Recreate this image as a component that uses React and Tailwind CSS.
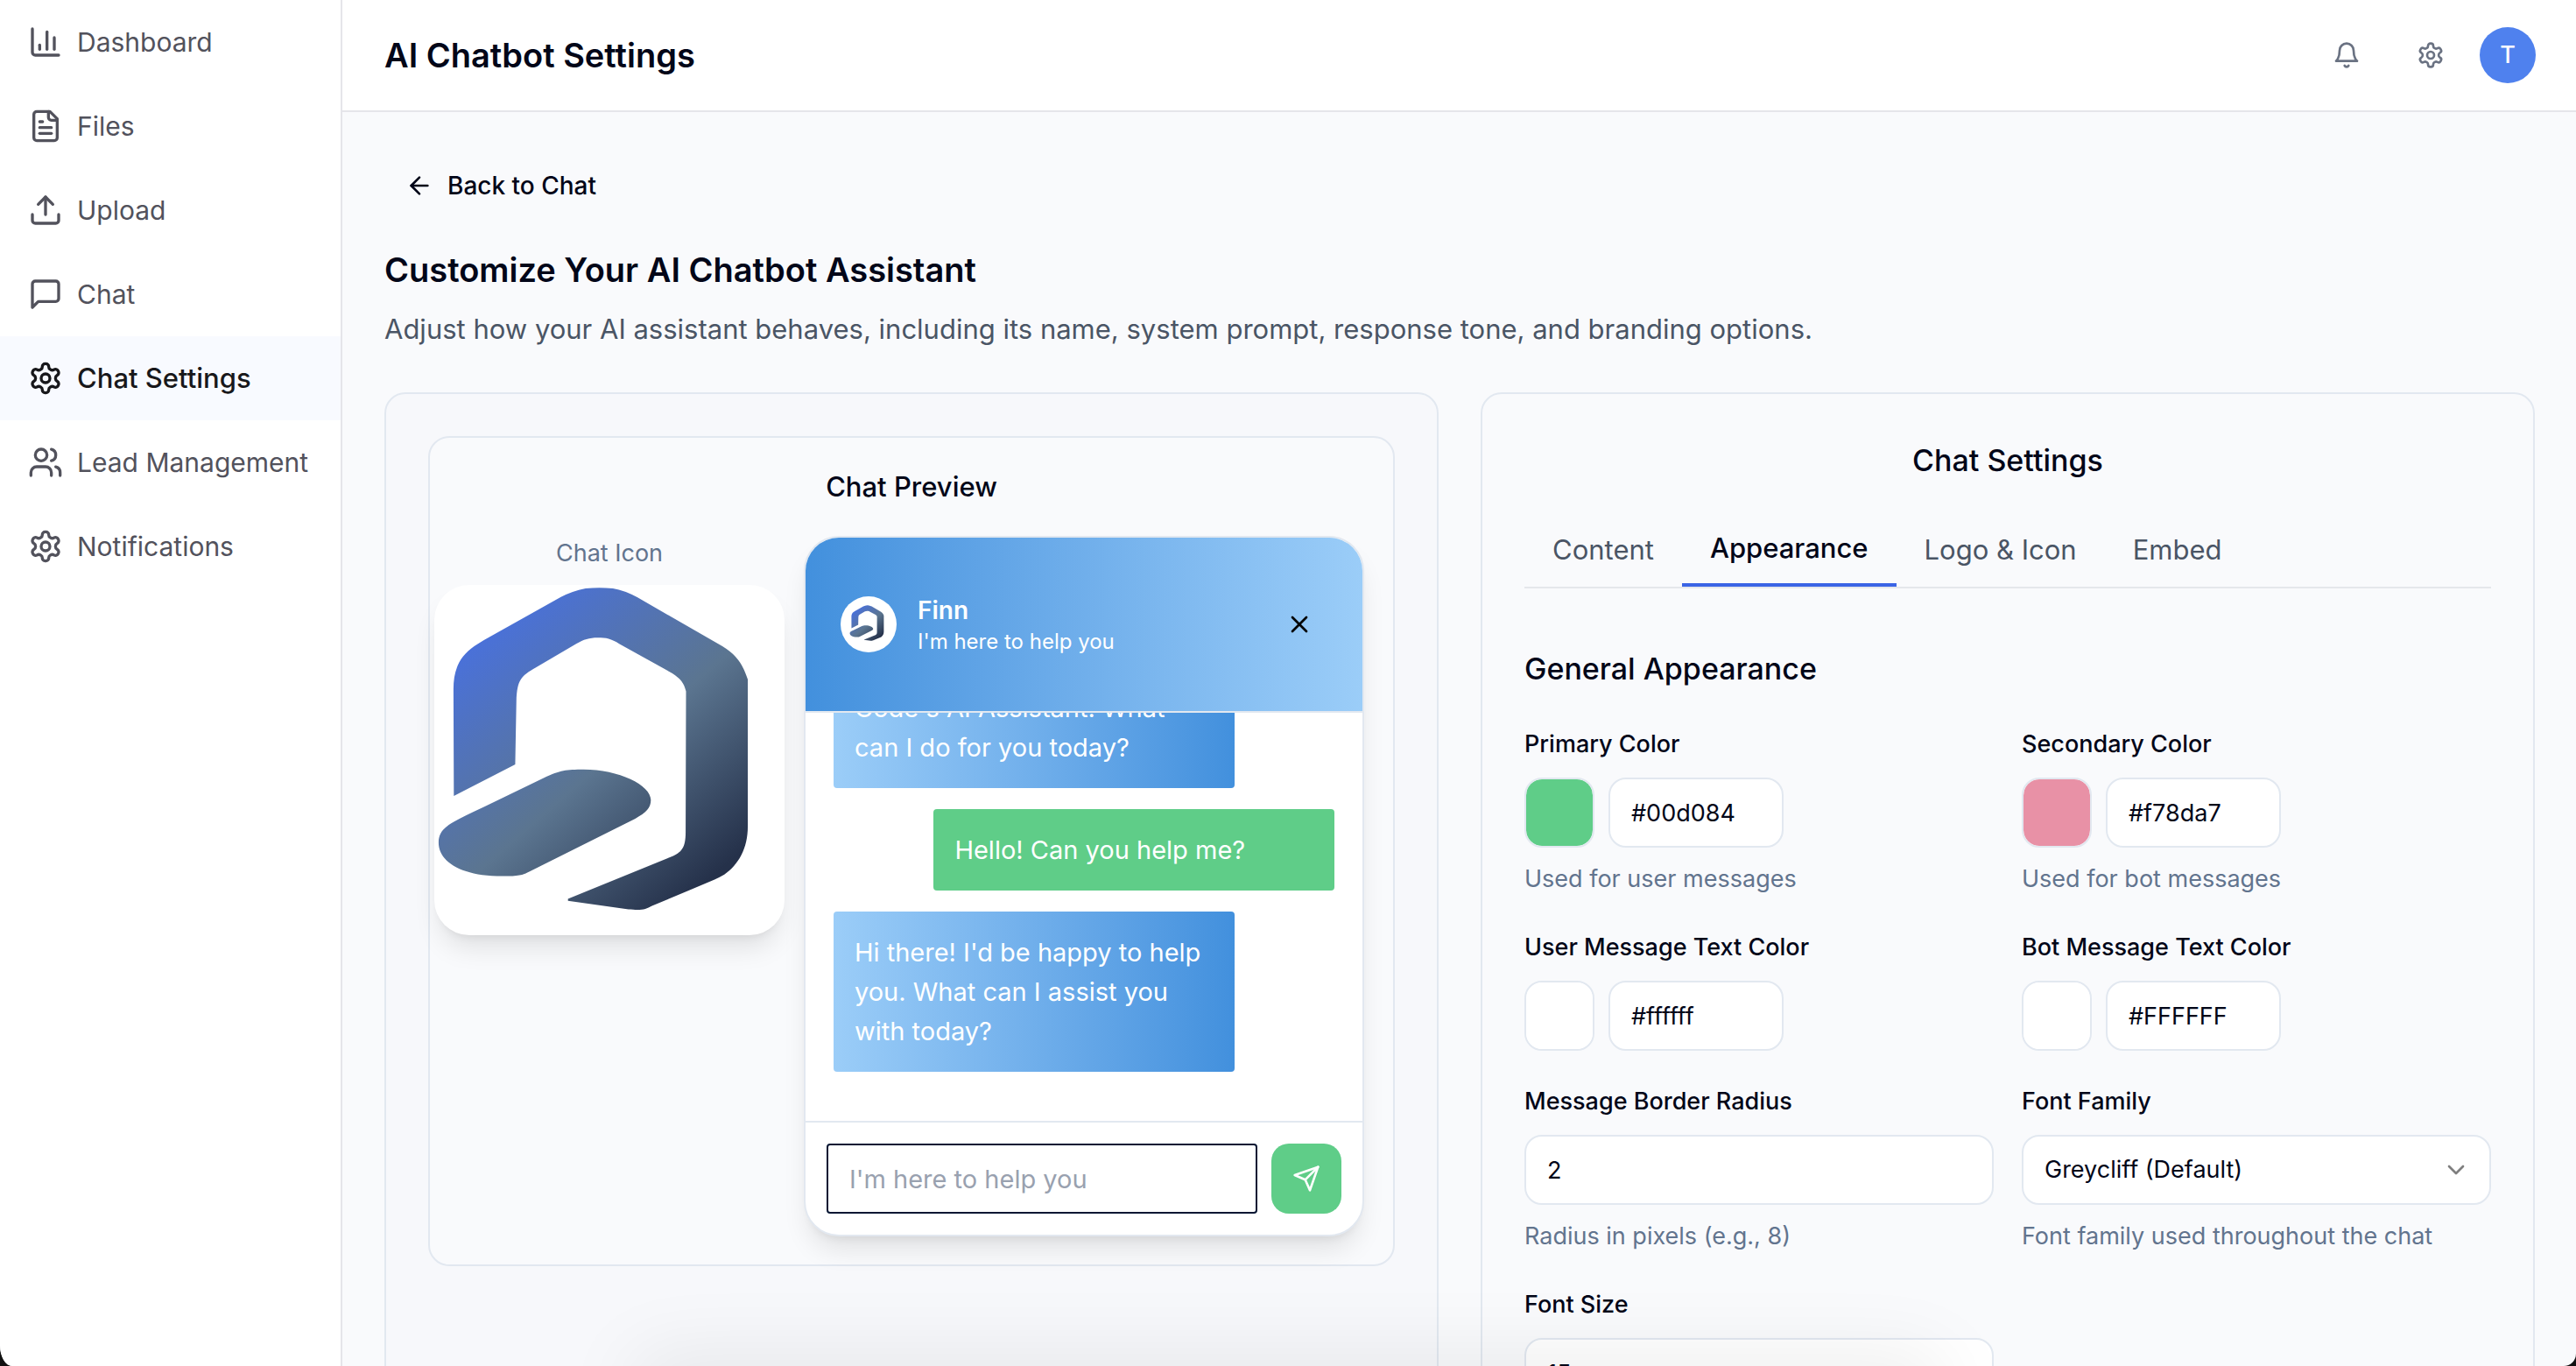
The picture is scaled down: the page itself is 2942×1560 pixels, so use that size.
import React, { useId, useState } from "react";
import { ArrowLeft, ChartColumn, ChevronDown, X } from "lucide-react";

function Icon({ className, children }) {
  return (
    <svg
      viewBox="0 0 24 24"
      fill="none"
      stroke="currentColor"
      strokeWidth="2"
      strokeLinecap="round"
      strokeLinejoin="round"
      aria-hidden="true"
      className={className}
    >
      {children}
    </svg>
  );
}

const FileIcon = (p) => (
  <Icon {...p}>
    <path d="M15 2H6a2 2 0 0 0-2 2v16a2 2 0 0 0 2 2h12a2 2 0 0 0 2-2V7Z" />
    <path d="M14 2v4a2 2 0 0 0 2 2h4" />
    <path d="M10 9H8" />
    <path d="M16 13H8" />
    <path d="M16 17H8" />
  </Icon>
);

const UploadIcon = (p) => (
  <Icon {...p}>
    <path d="M21 15v4a2 2 0 0 1-2 2H5a2 2 0 0 1-2-2v-4" />
    <path d="m17 8-5-5-5 5" />
    <path d="M12 3v12" />
  </Icon>
);

const MessageIcon = (p) => (
  <Icon {...p}>
    <path d="M21 15a2 2 0 0 1-2 2H7l-4 4V5a2 2 0 0 1 2-2h14a2 2 0 0 1 2 2z" />
  </Icon>
);

const GearIcon = (p) => (
  <Icon {...p}>
    <path d="M12.22 2h-.44a2 2 0 0 0-2 2v.18a2 2 0 0 1-1 1.73l-.43.25a2 2 0 0 1-2 0l-.15-.08a2 2 0 0 0-2.73.73l-.22.38a2 2 0 0 0 .73 2.73l.15.1a2 2 0 0 1 1 1.72v.51a2 2 0 0 1-1 1.74l-.15.09a2 2 0 0 0-.73 2.73l.22.38a2 2 0 0 0 2.73.73l.15-.08a2 2 0 0 1 2 0l.43.25a2 2 0 0 1 1 1.73V20a2 2 0 0 0 2 2h.44a2 2 0 0 0 2-2v-.18a2 2 0 0 1 1-1.73l.43-.25a2 2 0 0 1 2 0l.15.08a2 2 0 0 0 2.73-.73l.22-.39a2 2 0 0 0-.73-2.73l-.15-.08a2 2 0 0 1-1-1.74v-.5a2 2 0 0 1 1-1.74l.15-.09a2 2 0 0 0 .73-2.73l-.22-.38a2 2 0 0 0-2.73-.73l-.15.08a2 2 0 0 1-2 0l-.43-.25a2 2 0 0 1-1-1.73V4a2 2 0 0 0-2-2z" />
    <circle cx="12" cy="12" r="3" />
  </Icon>
);

const UsersIcon = (p) => (
  <Icon {...p}>
    <path d="M16 21v-2a4 4 0 0 0-4-4H6a4 4 0 0 0-4 4v2" />
    <circle cx="9" cy="7" r="4" />
    <path d="M22 21v-2a4 4 0 0 0-3-3.87" />
    <path d="M16 3.13a4 4 0 0 1 0 7.75" />
  </Icon>
);

const BellIcon = (p) => (
  <Icon {...p}>
    <path d="M6 8a6 6 0 0 1 12 0c0 7 3 9 3 9H3s3-2 3-9" />
    <path d="M10.3 21a1.94 1.94 0 0 0 3.4 0" />
  </Icon>
);

const SendIcon = (p) => (
  <Icon {...p}>
    <path d="m22 2-7 20-4-9-9-4Z" />
    <path d="M22 2 11 13" />
  </Icon>
);

function BrandMark({ className }) {
  const id = useId();
  return (
    <svg viewBox="148 533 896 896" aria-hidden="true" className={className}>
      <defs>
        <linearGradient id={id} gradientUnits="userSpaceOnUse" x1="220" y1="720" x2="774" y2="1355">
          <stop offset="0" stopColor="#4a71d8" />
          <stop offset="0.52" stopColor="#5b7590" />
          <stop offset="1" stopColor="#25314a" />
        </linearGradient>
      </defs>
      <g fill={`url(#${id})`}>
        <path d="M198 1073L197 800C197 748 214 715 250 690Q262 682 275 674L472 564Q500 549 535 542Q570 538 605 542Q635 547 668 565L885 690C925 714 938 740 950 775L950 1150C950 1208 926 1248 890 1274Q878 1281 865 1287L705 1354C688 1363 680 1366 645 1363L490 1341L490 1336L755 1228C780 1217 791 1206 791 1165L792 805C786 782 778 773 757 759L622 684C600 670 588 668 566 668C544 668 530 673 512 683L408 744C370 766 360 775 358 830L355 992Z" />
        <path d="M159 1192C159 1168 172 1154 198 1139Q225 1124 275 1101L430 1026C470 1007 485 1005 530 1005C620 1005 702 1045 702 1083C702 1104 690 1115 662 1131L392 1266C372 1276 365 1278 322 1278C215 1278 159 1240 159 1192Z" />
      </g>
    </svg>
  );
}

const navItems = [
  { label: "Dashboard", icon: ChartColumn },
  { label: "Files", icon: FileIcon },
  { label: "Upload", icon: UploadIcon },
  { label: "Chat", icon: MessageIcon },
  { label: "Chat Settings", icon: GearIcon, active: true },
  { label: "Lead Management", icon: UsersIcon },
  { label: "Notifications", icon: GearIcon },
];

function Sidebar() {
  return (
    <nav aria-label="Main" className="w-[391px] shrink-0 border-r-2 border-[#e5e5ea] bg-white">
      <ul>
        {navItems.map(({ label, icon: I, active }) => (
          <li key={label}>
            <a
              href="#"
              aria-current={active ? "page" : undefined}
              className={
                active
                  ? "flex h-24 items-center gap-4 bg-[#f8faff] px-8 text-[31px] font-medium text-zinc-900"
                  : "flex h-24 items-center gap-4 px-8 text-[30px] text-zinc-600"
              }
            >
              <I className="size-10 shrink-0" />
              <span className="whitespace-nowrap">{label}</span>
            </a>
          </li>
        ))}
      </ul>
    </nav>
  );
}

function Header() {
  return (
    <header className="flex h-32 shrink-0 items-center justify-between border-b-2 border-[#e5e5ea] bg-white pr-[46px] pl-12">
      <h1 className="text-[38px] font-semibold text-slate-950">AI Chatbot Settings</h1>
      <div className="flex items-center gap-4 text-gray-500">
        <button aria-label="Notifications" className="grid size-20 place-items-center">
          <BellIcon className="size-8" />
        </button>
        <button aria-label="Settings" className="grid size-20 place-items-center">
          <GearIcon className="size-8" />
        </button>
        <button
          aria-label="Account"
          className="grid size-16 place-items-center rounded-full bg-[#4f81ee] text-[27px] font-medium text-white"
        >
          T
        </button>
      </div>
    </header>
  );
}

function BotMessage({ children }) {
  return (
    <p className="w-4/5 shrink-0 self-start rounded-[4px] bg-linear-to-r from-[#9bcdf8] to-[#4290dd] p-6">
      {children}
    </p>
  );
}

function ChatWindow() {
  return (
    <section
      aria-label="Chat window"
      className="flex h-[800px] w-[640px] flex-col overflow-hidden rounded-[40px] border-2 border-slate-200 bg-white shadow-[0_20px_30px_-6px_rgba(0,0,0,0.1),0_8px_12px_-8px_rgba(0,0,0,0.1)]"
    >
      <div className="flex h-[200px] shrink-0 items-center border-b-2 border-slate-200 bg-linear-to-r from-[#4290dd] to-[#9bcdf8] px-10 text-white">
        <div className="grid size-16 place-items-center rounded-full bg-white">
          <BrandMark className="size-11" />
        </div>
        <div className="ml-6 grow">
          <h3 className="text-[28px] leading-10 font-semibold">Finn</h3>
          <p className="text-2xl leading-8">I'm here to help you</p>
        </div>
        <button aria-label="Close chat" className="grid size-16 place-items-center text-black">
          <X className="size-8" />
        </button>
      </div>
      <div className="flex min-h-0 grow flex-col justify-end gap-6 overflow-hidden px-8 pb-14 text-[29px] leading-[45px] text-white">
        <BotMessage>
          Code's AI Assistant! What
          <br />
          can I do for you today?
        </BotMessage>
        <p className="w-4/5 shrink-0 self-end rounded-[4px] bg-[#5fcd88] p-6">Hello! Can you help me?</p>
        <BotMessage>Hi there! I'd be happy to help you. What can I assist you with today?</BotMessage>
      </div>
      <form
        onSubmit={(e) => e.preventDefault()}
        className="flex shrink-0 items-center gap-4 border-t-2 border-slate-200 p-6"
      >
        <input
          aria-label="Message"
          placeholder="I'm here to help you"
          className="h-20 min-w-0 grow rounded-[4px] border-2 border-[#061633] px-6 text-[29px] text-slate-950 outline-none placeholder:text-gray-400"
        />
        <button
          aria-label="Send message"
          className="grid size-20 shrink-0 place-items-center rounded-[20px] bg-[#5fcd88] text-white"
        >
          <SendIcon className="size-8" />
        </button>
      </form>
    </section>
  );
}

function PreviewCard() {
  return (
    <section className="rounded-3xl border-2 border-slate-200 bg-[#f7f8fb] p-12">
      <div className="rounded-3xl border-2 border-slate-200 bg-[#f9fafc] py-8">
        <h2 className="text-center text-[31px] leading-[48px] font-medium text-slate-950">Chat Preview</h2>
        <div className="mt-8 flex items-start justify-end gap-[22px] pr-[33px]">
          <div className="flex flex-col items-center gap-4">
            <p className="text-[27px] leading-10 text-slate-500">Chat Icon</p>
            <div className="rounded-[40px] bg-white shadow-[0_20px_30px_-6px_rgba(0,0,0,0.1),0_8px_12px_-8px_rgba(0,0,0,0.1)]">
              <BrandMark className="size-[400px]" />
            </div>
          </div>
          <ChatWindow />
        </div>
      </div>
    </section>
  );
}

const tabs = ["Content", "Appearance", "Logo & Icon", "Embed"];

const fieldClass =
  "h-20 rounded-[20px] border-2 border-slate-200 bg-white px-6 text-[27px] text-slate-950 outline-none";

function Field({ label, hint, htmlFor, children }) {
  return (
    <div className="flex flex-col">
      <label htmlFor={htmlFor} className="mb-6 text-[27px] leading-7 font-medium text-slate-950">
        {label}
      </label>
      {children}
      {hint && <p className="mt-4 text-[27px] leading-10 text-slate-500">{hint}</p>}
    </div>
  );
}

function ColorField({ label, hint, value, swatch }) {
  const id = useId();
  const [color, setColor] = useState(swatch);
  const [text, setText] = useState(value);
  return (
    <Field label={label} hint={hint} htmlFor={id}>
      <div className="flex gap-4">
        <input
          type="color"
          aria-label={`${label} picker`}
          value={color}
          onChange={(e) => {
            setColor(e.target.value);
            setText(e.target.value);
          }}
          className="size-20 appearance-none overflow-hidden rounded-[20px] border-2 border-slate-200 bg-white p-0 [&::-webkit-color-swatch]:rounded-[18px] [&::-webkit-color-swatch]:border-0 [&::-webkit-color-swatch-wrapper]:p-0"
        />
        <input
          id={id}
          type="text"
          value={text}
          onChange={(e) => setText(e.target.value)}
          className={`${fieldClass} w-[200px]`}
        />
      </div>
    </Field>
  );
}

function SettingsCard() {
  return (
    <section className="rounded-3xl border-2 border-slate-200 bg-[#f9fafc] p-12">
      <h2 className="text-center text-[34px] leading-[56px] font-medium text-slate-950">Chat Settings</h2>
      <div role="tablist" className="mt-8 flex border-b-2 border-gray-200">
        {tabs.map((tab) => (
          <button
            key={tab}
            role="tab"
            aria-selected={tab === "Appearance"}
            className={
              tab === "Appearance"
                ? "border-b-4 border-[#3b64e5] px-8 py-4 text-[31px] leading-[48px] font-medium text-slate-950"
                : "px-8 py-4 text-[31px] leading-[48px] text-gray-600"
            }
          >
            {tab}
          </button>
        ))}
      </div>
      <h3 className="mt-16 text-[34px] leading-[56px] font-medium text-slate-950">General Appearance</h3>
      <div className="mt-11 grid grid-cols-2 gap-x-8 gap-y-11">
        <ColorField label="Primary Color" hint="Used for user messages" value="#00d084" swatch="#5fcd88" />
        <ColorField label="Secondary Color" hint="Used for bot messages" value="#f78da7" swatch="#e891a6" />
        <ColorField label="User Message Text Color" value="#ffffff" swatch="#ffffff" />
        <ColorField label="Bot Message Text Color" value="#FFFFFF" swatch="#ffffff" />
        <Field label="Message Border Radius" hint="Radius in pixels (e.g., 8)" htmlFor="radius">
          <input id="radius" type="text" inputMode="numeric" defaultValue="2" className={fieldClass} />
        </Field>
        <Field label="Font Family" hint="Font family used throughout the chat" htmlFor="family">
          <div className="relative">
            <select id="family" className={`${fieldClass} w-full appearance-none`}>
              <option>Greycliff (Default)</option>
            </select>
            <ChevronDown className="pointer-events-none absolute top-6 right-6 size-8 text-black/50" />
          </div>
        </Field>
        <Field label="Font Size" htmlFor="size">
          <input id="size" type="text" inputMode="numeric" defaultValue="15" className={fieldClass} />
        </Field>
      </div>
    </section>
  );
}

export default function App() {
  return (
    <div className="h-screen overflow-hidden bg-[#111111] font-['Inter','Liberation_Sans',sans-serif]">
      <div className="relative flex h-full overflow-hidden rounded-br-[14px] bg-[#f9fafc] [border-bottom-left-radius:14px_24px]">
        <Sidebar />
        <div className="flex min-w-0 grow flex-col">
          <Header />
          <main className="min-h-0 grow overflow-hidden py-12 pr-[47px] pl-12">
            <a
              href="#"
              className="inline-flex h-[72px] items-center gap-4 px-6 align-top text-[28px] font-medium text-slate-950"
            >
              <ArrowLeft className="size-8" />
              Back to Chat
            </a>
            <h2 className="mt-8 text-[38px] leading-[56px] font-semibold text-slate-950">
              Customize Your AI Chatbot Assistant
            </h2>
            <p className="mt-4 text-[31px] leading-[48px] text-gray-600">
              Adjust how your AI assistant behaves, including its name, system prompt, response tone, and branding
              options.
            </p>
            <div className="mt-12 grid grid-cols-2 gap-12">
              <PreviewCard />
              <SettingsCard />
            </div>
          </main>
        </div>
        <div
          aria-hidden="true"
          className="pointer-events-none absolute inset-x-1/4 top-full h-16 shadow-[0_0_90px_10px_rgba(0,0,0,0.08)]"
        />
      </div>
    </div>
  );
}
